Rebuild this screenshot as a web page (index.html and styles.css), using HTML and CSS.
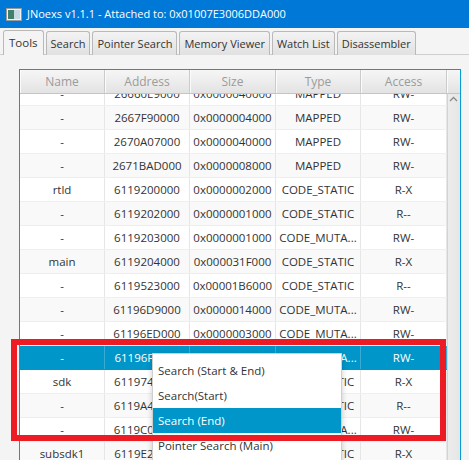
FILE: index.html
```html
<!DOCTYPE html>
<html lang="en">

<head>
    <meta charset="UTF-8">
    <meta name="viewport" content="width=device-width, initial-scale=1.0">
    <title>JNoexs</title>
    <link rel="stylesheet" href="styles.css">
</head>

<body>
    <div class="window">
        <div class="titlebar">
            <svg class="app-icon" width="16" height="13" viewBox="0 0 16 13">
                <rect x="0.5" y="0.5" width="15" height="12" fill="#f2f2f2" stroke="#9a9a9a" />
                <rect x="2" y="2" width="6" height="9" fill="#3f7f6c" />
                <rect x="8" y="2" width="6" height="9" fill="#c9d9e4" />
            </svg>
            <span class="title-text">JNoexs v1.1.1 - Attached to: 0x01007E3006DDA000</span>
        </div>

        <div class="tab-header">
            <div class="tab active">Tools</div>
            <div class="tab">Search</div>
            <div class="tab">Pointer Search</div>
            <div class="tab">Memory Viewer</div>
            <div class="tab">Watch List</div>
            <div class="tab">Disassembler</div>
        </div>

        <div class="content">
            <div class="table">
                <div class="table-head">
                    <div class="th">Name</div>
                    <div class="th">Address</div>
                    <div class="th">Size</div>
                    <div class="th">Type</div>
                    <div class="th">Access</div>
                    <div class="th corner"></div>
                </div>
                <div class="table-main">
                    <div class="rows">
                        <div class="row scrolled">
                            <div class="td">-</div><div class="td">26660E9000</div><div class="td">0x0000040000</div><div class="td">MAPPED</div><div class="td">RW-</div>
                        </div>
                        <div class="row odd">
                            <div class="td">-</div><div class="td">2667F90000</div><div class="td">0x0000004000</div><div class="td">MAPPED</div><div class="td">RW-</div>
                        </div>
                        <div class="row">
                            <div class="td">-</div><div class="td">2670A07000</div><div class="td">0x0000040000</div><div class="td">MAPPED</div><div class="td">RW-</div>
                        </div>
                        <div class="row odd">
                            <div class="td">-</div><div class="td">2671BAD000</div><div class="td">0x0000008000</div><div class="td">MAPPED</div><div class="td">RW-</div>
                        </div>
                        <div class="row">
                            <div class="td">rtld</div><div class="td">6119200000</div><div class="td">0x0000002000</div><div class="td">CODE_STATIC</div><div class="td">R-X</div>
                        </div>
                        <div class="row odd">
                            <div class="td">-</div><div class="td">6119202000</div><div class="td">0x0000001000</div><div class="td">CODE_STATIC</div><div class="td">R--</div>
                        </div>
                        <div class="row">
                            <div class="td">-</div><div class="td">6119203000</div><div class="td">0x0000001000</div><div class="td">CODE_MUTA...</div><div class="td">RW-</div>
                        </div>
                        <div class="row odd">
                            <div class="td">main</div><div class="td">6119204000</div><div class="td">0x000031F000</div><div class="td">CODE_STATIC</div><div class="td">R-X</div>
                        </div>
                        <div class="row">
                            <div class="td">-</div><div class="td">6119523000</div><div class="td">0x00001B6000</div><div class="td">CODE_STATIC</div><div class="td">R--</div>
                        </div>
                        <div class="row odd">
                            <div class="td">-</div><div class="td">61196D9000</div><div class="td">0x0000014000</div><div class="td">CODE_MUTA...</div><div class="td">RW-</div>
                        </div>
                        <div class="row">
                            <div class="td">-</div><div class="td">61196ED000</div><div class="td">0x0000003000</div><div class="td">CODE_MUTA...</div><div class="td">RW-</div>
                        </div>
                        <div class="row selected">
                            <div class="td">-</div><div class="td">61196F0000</div><div class="td">0x0000004000</div><div class="td">CODE_MUTA...</div><div class="td">RW-</div>
                        </div>
                        <div class="row">
                            <div class="td">sdk</div><div class="td">6119740000</div><div class="td">0x0000330000</div><div class="td">CODE_STATIC</div><div class="td">R-X</div>
                        </div>
                        <div class="row odd">
                            <div class="td">-</div><div class="td">6119A40000</div><div class="td">0x0000180000</div><div class="td">CODE_STATIC</div><div class="td">R--</div>
                        </div>
                        <div class="row">
                            <div class="td">-</div><div class="td">6119C00000</div><div class="td">0x0000220000</div><div class="td">CODE_MUTA...</div><div class="td">RW-</div>
                        </div>
                        <div class="row odd">
                            <div class="td">subsdk1</div><div class="td">6119E20000</div><div class="td">0x0000040000</div><div class="td">CODE_STATIC</div><div class="td">R-X</div>
                        </div>
                    </div>
                    <div class="vscroll">
                        <svg class="scroll-arrow" width="9" height="6" viewBox="0 0 9 6">
                            <polyline points="1,5 4.5,1.5 8,5" fill="none" stroke="#8a8a8a" stroke-width="1.3" />
                        </svg>
                    </div>
                </div>
            </div>
        </div>

        <!-- right-click menu on the selected row -->
        <div class="context-menu">
            <div class="menu-item">Search (Start &amp; End)</div>
            <div class="menu-item">Search(Start)</div>
            <div class="menu-item hover">Search (End)</div>
            <div class="menu-item">Pointer Search (Main)</div>
        </div>

        <div class="highlight-box"></div>
    </div>
</body>

</html>
```

FILE: styles.css
```css
:root {
    --accent: #0096c9;
    --focus: #039ed3;
    --window-blue: #0078d7;
    --background: #f4f4f4;
    --text: #333333;
    --cell-border: #e6e6e6;
    --tab-border: #b9b9b9;
    --mark-red: #ed1c24;
}

* {
    margin: 0;
    padding: 0;
    box-sizing: border-box;
}

html,
body {
    height: 100%;
    overflow: hidden;
}

body {
    font-family: "Open Sans", "Noto Sans", sans-serif;
    font-size: 11.5px;
    color: var(--text);
    background-color: var(--background);
}

.window {
    position: relative;
    height: 100%;
}

/* title bar */
.titlebar {
    height: 28px;
    background-color: var(--window-blue);
    color: #ffffff;
    display: flex;
    align-items: center;
    padding-left: 6px;
    gap: 5px;
}

.app-icon {
    display: block;
    flex: none;
}

.title-text {
    font-size: 11px;
    line-height: 1;
    margin-top: -1px;
}

/* tabs */
.tab-header {
    display: flex;
    align-items: flex-end;
    gap: 2px;
    height: 27px;
    padding-left: 3px;
    border-bottom: 1px solid #cfcfcf;
}

.tab {
    height: 24px;
    padding: 0 4px;
    display: flex;
    align-items: center;
    border: 1px solid var(--tab-border);
    border-bottom: none;
    border-radius: 3px 3px 0 0;
    background: linear-gradient(#f3f3f3, #e1e1e1);
    color: #333333;
    font-size: 11px;
    white-space: nowrap;
    margin-bottom: -1px;
}

.tab.active {
    height: 25px;
    background: var(--background);
    padding: 0 5px 1px;
    font-size: 11.5px;
}

/* content */
.content {
    padding: 14px 8px 0 19px;
}

.table {
    height: 400px;
    border: 1px solid var(--focus);
    box-shadow: inset 0 0 0 1px #c8e9f5;
    background-color: #ffffff;
    display: flex;
    flex-direction: column;
}

.table-head,
.row {
    display: grid;
    grid-template-columns: 85px 85px 86px 85px 86px;
}

.table-head {
    grid-template-columns: 85px 85px 86px 85px 86px 13px;
    height: 24px;
    background: linear-gradient(#f6f6f6, #e3e3e3);
    border-bottom: 1px solid #c5c5c5;
    flex: none;
}

.th {
    display: flex;
    align-items: center;
    justify-content: center;
    color: #9b9b9b;
    font-size: 12px;
    border-right: 1px solid #cbcbcb;
    box-shadow: inset 1px 0 0 #fbfbfb;
}

.th.corner {
    border-right: none;
}

.table-main {
    flex: 1;
    display: flex;
    overflow: hidden;
}

.rows {
    width: 427px;
    margin-top: -12px;
}

.row {
    height: 24px;
    background-color: #ffffff;
    border-bottom: 1px solid #efefef;
}

.row.odd {
    background-color: #f9f9f9;
}

.row.selected {
    background-color: var(--accent);
    color: #ffffff;
    border-bottom-color: var(--accent);
}

.td {
    display: flex;
    align-items: center;
    justify-content: center;
    white-space: nowrap;
    overflow: hidden;
    border-right: 1px solid var(--cell-border);
}

.row.selected .td {
    border-right-color: #3aaad3;
}

.vscroll {
    width: 13px;
    background: linear-gradient(90deg, #d4d4d4 0, #d4d4d4 1px, #ececec 1px, #e6e6e6 100%);
    display: flex;
    justify-content: center;
    padding-top: 2px;
}

.scroll-arrow {
    display: block;
}

/* context menu */
.context-menu {
    position: absolute;
    left: 152px;
    top: 353px;
    width: 190px;
    height: 140px;
    background-color: #ffffff;
    border: 1px solid #cfcfcf;
    box-shadow: 0 2px 6px rgba(0, 0, 0, 0.2);
    padding-top: 4px;
    font-size: 11.5px;
}

.menu-item {
    height: 25px;
    display: flex;
    align-items: center;
    padding-left: 5px;
    color: #333333;
    white-space: nowrap;
}

.menu-item.hover {
    background-color: var(--accent);
    color: #ffffff;
}

/* red annotation frame */
.highlight-box {
    position: absolute;
    left: 11px;
    top: 339px;
    width: 435px;
    height: 102px;
    border: 6px solid var(--mark-red);
    pointer-events: none;
}
```
